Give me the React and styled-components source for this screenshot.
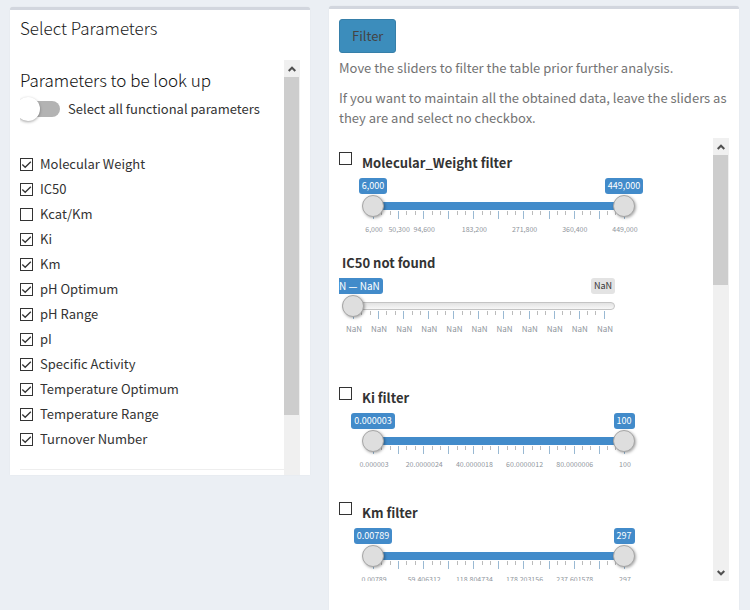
import React, { useState } from "react";
import styled, { createGlobalStyle, css } from "styled-components";

const GlobalStyle = createGlobalStyle`
  * { box-sizing: border-box; }
  body {
    margin: 0;
    background: #ebeff4;
    color: #333;
    font: 13px/20px "Noto Sans CJK SC", "Open Sans", sans-serif;
  }
`;

const Page = styled.main`
  display: grid;
  grid-template-columns: 300fr 410fr;
  gap: 19px;
  align-items: start;
  min-height: 100vh;
  padding: 6px 11px 0 10px;
`;

const Panel = styled.section`
  min-width: 0;
  padding: 10px 10px 0;
  background: #fff;
  border-top: 3px solid #d2d6de;
  border-radius: 3px 3px 0 0;
  box-shadow: 0 0 1px rgba(0, 0, 0, 0.12);
`;

const ParameterPanel = styled(Panel)`
  margin-top: 1px;
  padding-top: 8px;
`;

const FilterPanel = styled(Panel)`
  min-height: calc(100vh - 6px);
`;

const PanelTitle = styled.h3`
  margin: 0 0 22px;
  font-size: 17px;
  line-height: 20px;
  font-weight: 300;
  color: #222;
`;

const SectionTitle = styled.h4`
  margin: 0 0 7px;
  padding-top: 10px;
  font-size: 17px;
  line-height: 20px;
  font-weight: 300;
  color: #111;
`;

const ScrollFrame = styled.div`
  display: grid;
  grid-template-columns: minmax(0, 1fr) 16px;
  height: ${(p) => p.$height}px;
`;

const ScrollContent = styled.div`
  overflow: hidden;
`;

const ScrollBar = styled.div`
  display: flex;
  flex-direction: column;
  background: #f0f0f0;
`;

const ScrollArrow = styled.button`
  display: flex;
  align-items: center;
  justify-content: center;
  height: 17px;
  padding: 0;
  border: 0;
  background: none;
`;

const ScrollThumb = styled.div`
  height: ${(p) => p.$length}px;
  margin: 0 1px 0 0;
  background: #cdcdcd;
`;

const Spacer = styled.div`
  flex: 1;
`;

const SwitchRow = styled.label`
  display: flex;
  align-items: center;
  gap: 8px;
  height: 24px;
  margin-bottom: 33px;
  white-space: nowrap;
`;

const Switch = styled.input`
  appearance: none;
  display: flex;
  align-items: center;
  flex: none;
  width: 40px;
  height: 16px;
  margin: 0;
  border-radius: 8px;
  background: #b3b3b3;
  &::before {
    content: "";
    flex: none;
    width: 24px;
    height: 24px;
    margin-left: -4px;
    border-radius: 50%;
    background: #fff;
    box-shadow: 0 1px 3px rgba(0, 0, 0, 0.35);
  }
  &:checked { justify-content: flex-end; background: #428bca; }
`;

const CheckBox = styled.input.attrs({ type: "checkbox" })`
  appearance: none;
  flex: none;
  width: 13px;
  height: 13px;
  margin: 0;
  border: 1px solid #333;
  background: #fff;
  &:checked {
    background: #fff
      url("data:image/svg+xml,%3Csvg xmlns='http://www.w3.org/2000/svg' viewBox='0 0 11 11'%3E%3Cpath d='M1.3 5.5 4.2 8.3 9.8 2.7' fill='none' stroke='%23333' stroke-width='1.3'/%3E%3C/svg%3E");
  }
`;

const CheckList = styled.div`
  display: grid;
  gap: 5px;
`;

const CheckRow = styled.label`
  display: flex;
  align-items: center;
  gap: 7px;
  height: 20px;
`;

const Divider = styled.hr`
  margin: 20px 0;
  border: 0;
  border-top: 1px solid #eee;
`;

const FilterButton = styled.button`
  display: block;
  height: 34px;
  padding: 0 12px;
  border: 1px solid #367fa9;
  border-radius: 3px;
  background: #3c8dbc;
  color: #444;
  font: inherit;
`;

const Help = styled.p`
  margin: 0 0 10px;
  color: #737373;
`;

const HelpText = styled.div`
  padding-top: 5px;
`;

const FilterBlock = styled.div`
  display: grid;
  grid-template-columns: ${(p) => (p.$plain ? "1fr" : "13px 1fr")};
  gap: 10px;
  align-items: start;
  height: ${(p) => p.$height}px;
  padding: ${(p) => (p.$plain ? "5px 0 0 3px" : "4px 0 0")};
`;

const FilterBody = styled.div`
  padding-top: ${(p) => (p.$plain ? 0 : 1)}px;
`;

const FilterList = styled.div`
  padding-top: 10px;
`;

const FilterName = styled.div`
  margin-bottom: 5px;
  font-weight: 700;
`;

const Slider = styled.div`
  max-width: 273px;
`;

const Badges = styled.div`
  display: flex;
  justify-content: space-between;
  height: 17px;
  padding: 0 11px;
`;

const BadgeAnchor = styled.div`
  display: flex;
  justify-content: ${(p) => (p.$end ? "flex-end" : "center")};
  width: 0;
  ${(p) => p.$end && css`margin-right: -11px;`}
`;

const Badge = styled.output`
  flex: none;
  height: 16px;
  padding: 0 3px;
  border-radius: 3px;
  background: ${(p) => (p.$muted ? "#e3e3e3" : "#428bca")};
  color: ${(p) => (p.$muted ? "#333" : "#fff")};
  font-size: ${(p) => (p.$large ? 10 : 9)}px;
  line-height: 16px;
  white-space: nowrap;
`;

const RangeStack = styled.div`
  display: grid;
  align-items: center;
  height: 22px;
  > * { grid-area: 1 / 1; }
`;

const Track = styled.div`
  height: 8px;
  border-radius: 4px;
  ${(p) =>
    p.$empty
      ? css`
          border: 1px solid #c4c4c4;
          background: linear-gradient(#e2e2e2, #f7f7f7);
        `
      : css`
          margin: 0 11px;
          background: #428bca;
        `}
`;

const Range = styled.input.attrs({ type: "range" })`
  appearance: none;
  width: 100%;
  height: 22px;
  margin: 0;
  background: none;
  pointer-events: none;
  z-index: 1;
  &::-webkit-slider-thumb {
    appearance: none;
    width: 22px;
    height: 22px;
    border: 1px solid #a6a6a6;
    border-radius: 50%;
    background: #dedede;
    box-shadow: 1px 1px 3px rgba(0, 0, 0, 0.35);
    pointer-events: auto;
  }
`;

const Ticks = styled.div`
  display: flex;
  justify-content: space-between;
  height: 8px;
  margin: -6px 10px 4px 11px;
`;

const Tick = styled.i`
  width: 1px;
  height: ${(p) => (p.$major ? 8 : 4)}px;
  background: ${(p) => (p.$major ? "#99b9d3" : "#bbb")};
`;

const Scale = styled.div`
  display: flex;
  justify-content: space-between;
  height: 12px;
  padding: 0 10px 0 12px;
  color: #8f959c;
  font-size: ${(p) => (p.$large ? 8 : 7)}px;
  line-height: 12px;
`;

const ScaleLabel = styled.span`
  display: flex;
  justify-content: center;
  width: 0;
  white-space: nowrap;
`;

const parameters = [
  "Molecular Weight", "IC50", "Kcat/Km", "Ki", "Km", "pH Optimum", "pH Range",
  "pI", "Specific Activity", "Temperature Optimum", "Temperature Range", "Turnover Number",
];

const filters = [
  { name: "Molecular_Weight filter", height: 100, from: "6,000", to: "449,000",
    scale: ["6,000", "50,300", "94,600", "", "183,200", "", "271,800", "", "360,400", "", "449,000"] },
  { name: "IC50 not found", height: 135, empty: true, from: "NaN — NaN", to: "NaN",
    scale: Array(11).fill("NaN") },
  { name: "Ki filter", height: 115, from: "0.000003", to: "100",
    scale: ["0.000003", "", "20.0000024", "", "40.0000018", "", "60.0000012", "", "80.0000006", "", "100"] },
  { name: "Km filter", height: 115, from: "0.00789", to: "297",
    scale: ["0.00789", "", "59.406312", "", "118.804734", "", "178.203156", "", "237.601578", "", "297"] },
];

function Chevron({ down }) {
  return (
    <svg width="8" height="6" viewBox="0 0 8 6" aria-hidden="true">
      <path d={down ? "M.7 1 4 4.3 7.3 1" : "M.7 5 4 1.7 7.3 5"} fill="none" stroke="#505050" strokeWidth="2" />
    </svg>
  );
}

function Scroller({ height, thumb, children }) {
  return (
    <ScrollFrame $height={height}>
      <ScrollContent>{children}</ScrollContent>
      <ScrollBar>
        <ScrollArrow type="button" aria-label="Scroll up"><Chevron /></ScrollArrow>
        <ScrollThumb $length={thumb} />
        <Spacer />
        {height > 420 && (
          <ScrollArrow type="button" aria-label="Scroll down"><Chevron down /></ScrollArrow>
        )}
      </ScrollBar>
    </ScrollFrame>
  );
}

function RangeFilter({ name, height, empty, from, to, scale }) {
  return (
    <FilterBlock $height={height} $plain={empty}>
      {!empty && <CheckBox aria-label={name} />}
      <FilterBody $plain={empty}>
        <FilterName>{name}</FilterName>
        <Slider role="group" aria-label={name}>
          <Badges>
            <BadgeAnchor><Badge $large={empty}>{from}</Badge></BadgeAnchor>
            <BadgeAnchor $end={empty}><Badge $muted={empty}>{to}</Badge></BadgeAnchor>
          </Badges>
          <RangeStack>
            <Track $empty={empty} />
            <Range aria-label={`${name} minimum`} defaultValue={0} />
            {!empty && <Range aria-label={`${name} maximum`} defaultValue={100} />}
          </RangeStack>
          <Ticks>
            {Array.from({ length: 31 }, (_, i) => <Tick key={i} $major={i % 3 === 0} />)}
          </Ticks>
          <Scale $large={empty}>
            {scale.map((text, i) => <ScaleLabel key={i}>{text}</ScaleLabel>)}
          </Scale>
        </Slider>
      </FilterBody>
    </FilterBlock>
  );
}

export default function App() {
  const [selected, setSelected] = useState(() => new Set(parameters.filter((p) => p !== "Kcat/Km")));
  const toggle = (name) =>
    setSelected((old) => {
      const next = new Set(old);
      if (!next.delete(name)) next.add(name);
      return next;
    });

  return (
    <>
      <GlobalStyle />
      <Page>
        <ParameterPanel>
          <PanelTitle>Select Parameters</PanelTitle>
          <Scroller height={415} thumb={338}>
            <SectionTitle>Parameters to be look up</SectionTitle>
            <SwitchRow>
              <Switch type="checkbox" role="switch" />
              Select all functional parameters
            </SwitchRow>
            <CheckList>
              {parameters.map((name) => (
                <CheckRow key={name}>
                  <CheckBox checked={selected.has(name)} onChange={() => toggle(name)} />
                  {name}
                </CheckRow>
              ))}
            </CheckList>
            <Divider />
          </Scroller>
        </ParameterPanel>
        <FilterPanel>
          <FilterButton type="button">Filter</FilterButton>
          <HelpText>
            <Help>Move the sliders to filter the table prior further analysis.</Help>
            <Help>
              If you want to maintain all the obtained data, leave the sliders as they are and
              select no checkbox.
            </Help>
          </HelpText>
          <Scroller height={443} thumb={130}>
            <FilterList>
              {filters.map((filter) => <RangeFilter key={filter.name} {...filter} />)}
            </FilterList>
          </Scroller>
        </FilterPanel>
      </Page>
    </>
  );
}
